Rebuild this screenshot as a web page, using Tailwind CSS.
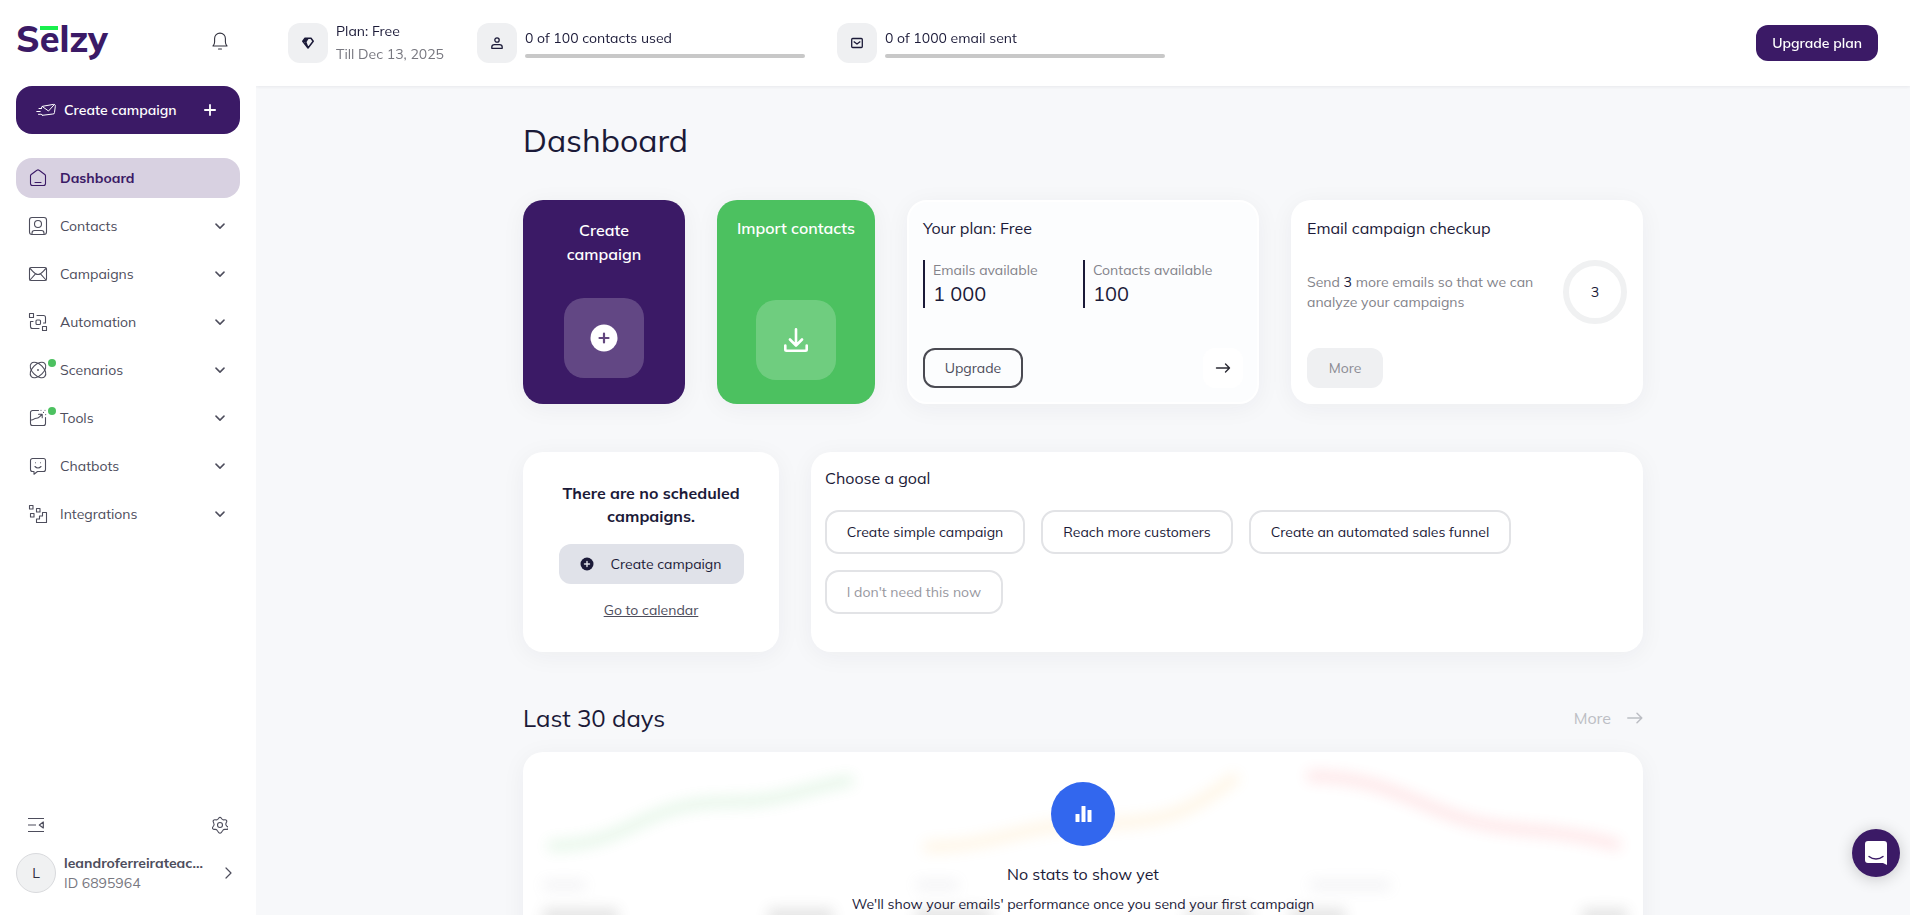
<!DOCTYPE html>
<html lang="en">
<head>
  <meta charset="UTF-8" />
  <meta name="viewport" content="width=device-width, initial-scale=1.0"/>
  <title>Dashboard | Selzy</title>
  <script src="https://cdn.jsdelivr.net/npm/@tailwindcss/browser@4"></script>
</head>
<body class="flex h-screen overflow-hidden bg-white font-['Mulish','Open_Sans',sans-serif] text-sm text-[#1b1a38]">

  <!-- Sidebar -->
  <aside class="z-20 flex w-64 shrink-0 flex-col bg-white px-4 pb-[22px]">
    <div class="flex h-[86px] items-center justify-between pr-3 pb-1">
      <a href="#" aria-label="Selzy" class="relative block pb-1 text-4xl leading-[38px] font-extrabold text-[#3b1a66]">Selzy
        <span class="absolute top-[6px] left-6 h-1 w-[18px] bg-[#19ef4d]"></span>
      </a>
      <button aria-label="Notifications">
        <svg class="h-[18px] w-4" viewBox="0 0 16 18" fill="none" stroke="#33333f" stroke-width="1.1" stroke-linecap="round" stroke-linejoin="round"><path d="M1 14h14c-1-1-1.600-2-1.600-4V6.500a5.400 5.400 0 0 0-10.800 0V10c0 2-.6 3-1.600 4zM6.500 17h3"/></svg>
      </button>
    </div>

    <button class="flex h-12 items-center rounded-2xl bg-[#3b1a66] pr-6 pl-5 font-semibold text-white">
      <svg class="mr-2 h-4 w-5" viewBox="0 0 20 16" fill="none" stroke="#fff" stroke-width="1" stroke-linecap="round" stroke-linejoin="round"><path d="M6.500 13.300 16.800 12a1.500 1.500 0 0 0 1.700-1.500l.8-6.200A1.500 1.500 0 0 0 17.500 2.400L7 4.200a1.500 1.500 0 0 0-1.600 1.300M6.500 13.300a1.500 1.500 0 0 1-1.300-1.100M6.300 4.500 12.500 9l5.700-6.300M3 6.500h2.500M.8 9.500h3.400M2.500 12.300h2"/></svg>
      Create campaign
      <svg class="ml-auto size-3" viewBox="0 0 12 12" stroke="#fff" stroke-width="1.800" stroke-linecap="round"><path d="M6 .9v10.200M.9 6h10.200"/></svg>
    </button>

    <nav class="mt-6 flex flex-col gap-2 text-[#4d4d5c]">
      <a href="#" class="flex h-10 items-center gap-3 rounded-2xl bg-[#d8d1e1] px-3 font-bold text-[#3b1a66]">
        <svg class="size-5" viewBox="0 0 20 20" fill="none" stroke="#3b1a66" stroke-width="1.100" stroke-linecap="round" stroke-linejoin="round"><path d="M2.500 7.800c0-.6.3-1 .7-1.300l5.700-4.200a1.800 1.800 0 0 1 2.200 0l5.700 4.200c.4.300.7.700.7 1.300v7.700a2 2 0 0 1-2 2h-11a2 2 0 0 1-2-2zM7 14.500h6"/></svg>
        Dashboard
      </a>
      <a href="#" class="flex h-10 items-center gap-3 px-3">
        <svg class="size-5" viewBox="0 0 20 20" fill="none" stroke="#4d4d5c" stroke-width="1.100" stroke-linecap="round" stroke-linejoin="round"><rect x="1.500" y="1.500" width="17" height="17" rx="2.500"/><circle cx="10" cy="8" r="3.500"/><path d="M4 18.200v-1c0-1.500 1-2.700 2.500-2.700h7c1.500 0 2.500 1.200 2.500 2.700v1"/></svg>
        Contacts
        <svg class="mr-[3px] ml-auto size-[10px]" viewBox="0 0 8 8" fill="none" stroke="#4d4d5c" stroke-width="1.200" stroke-linecap="round" stroke-linejoin="round"><path d="m.8 2.500 3.200 3.200 3.200-3.200"/></svg>
      </a>
      <a href="#" class="flex h-10 items-center gap-3 px-3">
        <svg class="size-5" viewBox="0 0 20 20" fill="none" stroke="#4d4d5c" stroke-width="1.100" stroke-linecap="round" stroke-linejoin="round"><rect x="1.500" y="3.500" width="17" height="13" rx="1.500"/><path d="M2 4.500c3 2.500 4.500 6 8 6s5-3.500 8-6M2 16l5.500-6.200M18 16l-5.500-6.200"/></svg>
        Campaigns
        <svg class="mr-[3px] ml-auto size-[10px]" viewBox="0 0 8 8" fill="none" stroke="#4d4d5c" stroke-width="1.200" stroke-linecap="round" stroke-linejoin="round"><path d="m.8 2.500 3.200 3.200 3.200-3.200"/></svg>
      </a>
      <a href="#" class="flex h-10 items-center gap-3 px-3">
        <svg class="size-5" viewBox="0 0 20 20" fill="none" stroke="#4d4d5c" stroke-width="1.100" stroke-linecap="round" stroke-linejoin="round"><rect x="1.500" y="1.500" width="4" height="4"/><rect x="14.500" y="14.500" width="4" height="4"/><rect x="8" y="8" width="4.500" height="4.500" rx="1"/><path d="M9 3.500h6.500a2 2 0 0 1 2 2V11h-2M11 16.500H4.500a2 2 0 0 1-2-2V9.500H5"/></svg>
        Automation
        <svg class="mr-[3px] ml-auto size-[10px]" viewBox="0 0 8 8" fill="none" stroke="#4d4d5c" stroke-width="1.200" stroke-linecap="round" stroke-linejoin="round"><path d="m.8 2.500 3.200 3.200 3.200-3.200"/></svg>
      </a>
      <a href="#" class="relative flex h-10 items-center gap-3 px-3">
        <svg class="size-5" viewBox="0 0 20 20" fill="none" stroke="#4d4d5c" stroke-width="1.100"><ellipse cx="10" cy="10" rx="9.500" ry="5.600" transform="rotate(45 10 10)"/><ellipse cx="10" cy="10" rx="9.500" ry="5.600" transform="rotate(-45 10 10)"/><circle cx="10" cy="10" r=".9" fill="#4d4d5c" stroke="none"/></svg>
        <span class="absolute top-[9px] left-8 size-2 rounded-full bg-[#4cc160]"></span>
        Scenarios
        <svg class="mr-[3px] ml-auto size-[10px]" viewBox="0 0 8 8" fill="none" stroke="#4d4d5c" stroke-width="1.200" stroke-linecap="round" stroke-linejoin="round"><path d="m.8 2.500 3.200 3.200 3.200-3.200"/></svg>
      </a>
      <a href="#" class="relative flex h-10 items-center gap-3 px-3">
        <svg class="size-5" viewBox="0 0 20 20" fill="none" stroke="#4d4d5c" stroke-width="1.100" stroke-linecap="round" stroke-linejoin="round"><path d="M10.500 2.500h-6a2 2 0 0 0-2 2v11a2 2 0 0 0 2 2h11a2 2 0 0 0 2-2v-6M3 12c2.500.5 3-2 5.500-1.800S11.500 8.500 14 6.500M10.500 6.300h3.700v3.500M13 2.200v.1M17 2.200v.1M15.500 4.300v.1M17.700 6.500v.1"/></svg>
        <span class="absolute top-[9px] left-8 size-2 rounded-full bg-[#4cc160]"></span>
        Tools
        <svg class="mr-[3px] ml-auto size-[10px]" viewBox="0 0 8 8" fill="none" stroke="#4d4d5c" stroke-width="1.200" stroke-linecap="round" stroke-linejoin="round"><path d="m.8 2.500 3.200 3.200 3.200-3.200"/></svg>
      </a>
      <a href="#" class="flex h-10 items-center gap-3 px-3">
        <svg class="size-5" viewBox="0 0 20 20" fill="none" stroke="#4d4d5c" stroke-width="1.100" stroke-linecap="round" stroke-linejoin="round"><path d="M4.500 2.500h11a2 2 0 0 1 2 2v9a2 2 0 0 1-2 2H9.500L6 18.200v-2.700H4.500a2 2 0 0 1-2-2v-9a2 2 0 0 1 2-2zM7 10.500c1.800 1.900 4.200 1.900 6 0M7.500 6.700v.1M12.500 6.700v.1"/></svg>
        Chatbots
        <svg class="mr-[3px] ml-auto size-[10px]" viewBox="0 0 8 8" fill="none" stroke="#4d4d5c" stroke-width="1.200" stroke-linecap="round" stroke-linejoin="round"><path d="m.8 2.500 3.200 3.200 3.200-3.200"/></svg>
      </a>
      <a href="#" class="flex h-10 items-center gap-3 px-3">
        <svg class="size-5" viewBox="0 0 20 20" fill="none" stroke="#4d4d5c" stroke-width="1.100" stroke-linejoin="round"><rect x="1.500" y="1.500" width="3.500" height="3.500"/><rect x="8.500" y="4.500" width="3.500" height="3.500"/><rect x="2.500" y="9.500" width="3.500" height="3.500"/><path d="M18.500 8.500h-4v3.500h-3v3h-3v3.500h10z"/></svg>
        Integrations
        <svg class="mr-[3px] ml-auto size-[10px]" viewBox="0 0 8 8" fill="none" stroke="#4d4d5c" stroke-width="1.200" stroke-linecap="round" stroke-linejoin="round"><path d="m.8 2.500 3.200 3.200 3.200-3.200"/></svg>
      </a>
    </nav>

    <div class="mt-auto flex h-5 items-center justify-between px-3">
      <button aria-label="Collapse menu">
        <svg class="size-4" viewBox="0 0 16 16" fill="none" stroke="#4d4d5c" stroke-width="1.200" stroke-linejoin="round"><path d="M0 1.500h16M0 8h8M0 14.500h16M15.300 5v6l-4-3z"/></svg>
      </button>
      <button aria-label="Settings">
        <svg class="h-[18px] w-4" viewBox="0 0 16 18" fill="none" stroke="#4d4d5c" stroke-width="1.100" stroke-linejoin="round"><path d="M6.800 1.400a1.500 1.500 0 0 1 2.400 0l.7 1c.4.600 1.100 1 1.800.9l1.300-.1a1.500 1.500 0 0 1 1.600 2.100l-.5 1.200a2 2 0 0 0 0 2l.7 1.100a1.500 1.500 0 0 1-.3 3.200h-1.800c-.7 0-1.400.3-1.800.9l-1.700 2.400a1.500 1.500 0 0 1-2.400 0L5.100 13.700c-.4-.6-1.100-.9-1.800-.9H1.900A1.500 1.500 0 0 1 .8 10.400l1.100-1.700a2 2 0 0 0 0-1.600L1.300 5.300A1.500 1.500 0 0 1 3 3.200l1.300.1c.7.1 1.400-.3 1.800-.9z" transform="translate(0 .6)"/><circle cx="8" cy="9" r="2.500"/></svg>
      </button>
    </div>
    <a href="#" class="mt-[18px] flex items-center pr-2">
      <span class="mr-2 flex size-10 items-center justify-center rounded-full border border-[#d9dadd] bg-[#f0f1f2] text-[#2e2e42]">L</span>
      <span class="flex w-36 flex-col leading-5">
        <span class="font-bold text-[#4d4d5c]">leandroferreirateac...</span>
        <span class="text-[#77777f]">ID 6895964</span>
      </span>
      <svg class="ml-auto h-3 w-[7px]" viewBox="0 0 7 12" fill="none" stroke="#4d4d5c" stroke-width="1.200" stroke-linecap="round" stroke-linejoin="round"><path d="m1 1 5 5-5 5"/></svg>
    </a>
  </aside>

  <div class="flex min-w-0 flex-1 flex-col">
    <!-- Top bar -->
    <header class="z-10 flex h-[86px] shrink-0 items-center gap-8 bg-white px-8 shadow-[0_1px_3px_rgba(30,30,60,0.07)]">
      <div class="flex items-center gap-2">
        <span class="flex size-10 items-center justify-center rounded-xl bg-[#eff0f2]">
          <svg class="size-3" viewBox="0 0 12 12" fill="none" stroke="#1b1a38" stroke-width="1.500" stroke-linejoin="round"><path d="M3 1.200h6l2.200 3L6 11 .8 4.200zM3.500 4.500 6 11"/><path d="M3 1.200h4L4.500 5H1z" fill="#1b1a38" stroke="none"/></svg>
        </span>
        <p class="w-[109px] leading-[23px] whitespace-nowrap">Plan: Free<br><span class="text-[#77777f]">Till Dec 13, 2025</span></p>
      </div>
      <div class="flex items-center gap-2">
        <span class="flex size-10 items-center justify-center rounded-xl bg-[#eff0f2]">
          <svg class="size-3" viewBox="0 0 12 12" fill="none" stroke="#1b1a38" stroke-width="1.300" stroke-linejoin="round"><circle cx="6" cy="3" r="2.200"/><path d="M.8 11.300V10c0-1.500 1.200-2.300 2.700-2.300h5c1.500 0 2.700.8 2.700 2.300v1.300z"/></svg>
        </span>
        <div class="flex w-70 flex-col gap-[6px]">
          <span class="leading-5">0 of 100 contacts used</span>
          <span class="h-1 rounded-sm bg-[#c8c8c8]"></span>
        </div>
      </div>
      <div class="flex items-center gap-2">
        <span class="flex size-10 items-center justify-center rounded-xl bg-[#eff0f2]">
          <svg class="size-3" viewBox="0 0 12 12" fill="none" stroke="#1b1a38" stroke-width="1.300" stroke-linejoin="round"><rect x=".7" y="1.500" width="10.600" height="9" rx="1"/><path d="m2.700 4.500 3.300 2.500 3.300-2.500"/></svg>
        </span>
        <div class="flex w-70 flex-col gap-[6px]">
          <span class="leading-5">0 of 1000 email sent</span>
          <span class="h-1 rounded-sm bg-[#c8c8c8]"></span>
        </div>
      </div>
      <button class="ml-auto h-9 rounded-xl bg-[#3b1a66] px-4 font-semibold whitespace-nowrap text-white">Upgrade plan</button>
    </header>

    <!-- Content -->
    <main class="flex-1 overflow-y-auto bg-[#f7f8fa] px-8 [scrollbar-width:none]">
      <div class="mx-auto max-w-[1120px] pt-[34px] pb-16">
        <h1 class="text-[32px] leading-10">Dashboard</h1>

        <section class="mt-10 grid h-51 grid-cols-[162px_158px_1fr_1fr] gap-8">
          <button class="flex flex-col items-center justify-between rounded-[20px] bg-[#3b1a66] px-8 pt-[18px] pb-[26px] text-base leading-6 font-semibold text-white shadow-[0_4px_24px_rgba(30,30,60,0.05)]">
            Create campaign
            <span class="flex size-20 items-center justify-center rounded-[20px] bg-white/20">
              <svg class="size-7" viewBox="0 0 28 28"><circle cx="14" cy="14" r="13.500" fill="#fff"/><path d="M14 9.500v9M9.500 14h9" stroke="#63477f" stroke-width="2.200" stroke-linecap="round"/></svg>
            </span>
          </button>
          <button class="flex flex-col items-center justify-between rounded-[20px] bg-[#4cc160] px-2 pt-4 pb-6 text-base leading-6 font-semibold whitespace-nowrap text-white shadow-[0_4px_24px_rgba(30,30,60,0.05)]">
            Import contacts
            <span class="flex size-20 items-center justify-center rounded-[20px] bg-white/20">
              <svg class="size-6" viewBox="0 0 24 24" fill="none" stroke="#fff" stroke-width="2.600" stroke-linecap="round" stroke-linejoin="round"><path d="M12 1.300v15.500M6 11.500l6 6 6-6M1.300 17.500v4a1.200 1.200 0 0 0 1.200 1.200h19a1.200 1.200 0 0 0 1.200-1.200v-4"/></svg>
            </span>
          </button>

          <div class="flex flex-col rounded-[20px] border-2 border-white bg-[#fcfdfe] p-[14px] shadow-[0_4px_24px_rgba(30,30,60,0.05)]">
            <h2 class="text-base leading-6">Your plan: Free</h2>
            <div class="mt-5 grid grid-cols-2">
              <div class="h-12 border-l-2 border-[#1b1a38] pl-2">
                <p class="leading-5 text-[#83838a]">Emails available</p>
                <p class="text-xl leading-7">1 000</p>
              </div>
              <div class="h-12 border-l-2 border-[#1b1a38] pl-2">
                <p class="leading-5 text-[#83838a]">Contacts available</p>
                <p class="text-xl leading-7">100</p>
              </div>
            </div>
            <div class="mt-auto flex items-center justify-between">
              <button class="h-10 w-25 rounded-xl border-2 border-[#4a4a52] text-[#4d4d5c]">Upgrade</button>
              <button aria-label="Open plan" class="flex size-10 items-center justify-center rounded-xl bg-white">
                <svg class="h-3 w-4" viewBox="0 0 16 12" fill="none" stroke="#2a2a33" stroke-width="1.400" stroke-linecap="round" stroke-linejoin="round"><path d="M1.500 6h13M10.500 2l4 4-4 4"/></svg>
              </button>
            </div>
          </div>

          <div class="flex flex-col rounded-[20px] bg-white p-4 shadow-[0_4px_24px_rgba(30,30,60,0.05)]">
            <h2 class="text-base leading-6">Email campaign checkup</h2>
            <div class="mt-5 flex items-center justify-between">
              <p class="leading-5 whitespace-nowrap text-[#83838a]">Send <span class="text-[#1b1a38]">3</span> more emails so that we can<br>analyze your campaigns</p>
              <span class="flex size-16 items-center justify-center rounded-full border-6 border-[#f0f1f2]">3</span>
            </div>
            <button class="mt-auto h-10 w-19 rounded-xl bg-[#eff0f2] text-[#8c8c94]">More</button>
          </div>
        </section>

        <section class="mt-12 grid h-50 grid-cols-[256px_1fr] gap-8">
          <div class="flex flex-col items-center rounded-[20px] bg-white pt-[30px] shadow-[0_4px_24px_rgba(30,30,60,0.05)]">
            <h2 class="w-48 text-center text-base leading-[23px] font-bold">There are no scheduled campaigns.</h2>
            <button class="mt-4 flex h-10 w-[185px] items-center justify-center gap-4 rounded-xl bg-[#e0e2e9] whitespace-nowrap">
              <svg class="size-[14px]" viewBox="0 0 14 14"><circle cx="7" cy="7" r="6.500" fill="#1b1a38"/><path d="M7 4.500v5M4.500 7h5" stroke="#e0e2e9" stroke-width="1.400" stroke-linecap="round"/></svg>
              Create campaign
            </button>
            <a href="#" class="mt-4 leading-5 text-[#4d4d5c] underline">Go to calendar</a>
          </div>
          <div class="rounded-[20px] bg-white px-[14px] pt-[14px] shadow-[0_4px_24px_rgba(30,30,60,0.05)]">
            <h2 class="text-base leading-6">Choose a goal</h2>
            <div class="mt-5 flex flex-wrap gap-4">
              <button class="h-11 w-50 rounded-[14px] border-2 border-[#e2e3e6] whitespace-nowrap">Create simple campaign</button>
              <button class="h-11 w-48 rounded-[14px] border-2 border-[#e2e3e6] whitespace-nowrap">Reach more customers</button>
              <button class="h-11 w-[262px] rounded-[14px] border-2 border-[#e2e3e6] whitespace-nowrap">Create an automated sales funnel</button>
              <button class="h-11 w-[178px] rounded-[14px] border-2 border-[#e2e3e6] whitespace-nowrap text-[#98989f]">I don't need this now</button>
            </div>
          </div>
        </section>

        <section class="mt-12">
          <div class="flex h-9 items-center justify-between">
            <h2 class="text-2xl">Last 30 days</h2>
            <a href="#" class="flex items-center gap-4 text-base text-[#bcbec4]">More
              <svg class="h-3 w-4" viewBox="0 0 16 12" fill="none" stroke="#bcbec4" stroke-width="1.500" stroke-linecap="round" stroke-linejoin="round"><path d="M.8 6h14M10 1.200 14.800 6 10 10.800"/></svg>
            </a>
          </div>

          <div class="relative mt-4 h-70 overflow-hidden rounded-[20px] bg-white shadow-[0_4px_24px_rgba(30,30,60,0.05)]">
            <!-- Blurred placeholder charts -->
            <div class="grid grid-cols-3 opacity-15 blur-[7px]" aria-hidden="true">
              <svg class="h-50 w-full" viewBox="0 0 373 200" fill="none"><path d="M25 94C110 94 115 50 205 50 265 50 285 34 330 28" stroke="#4cc160" stroke-width="10"/><path d="M20 165h75M245 165h65" stroke="#555" stroke-width="18"/><path d="M20 133h42" stroke="#99a" stroke-width="8"/></svg>
              <svg class="h-50 w-full" viewBox="0 0 373 200" fill="none"><path d="M28 95c72 0 102-23 162-23 80 0 100-10 151-48" stroke="#ffb845" stroke-width="10"/><path d="M20 165h75M290 165h65" stroke="#555" stroke-width="18"/><path d="M20 133h42" stroke="#99a" stroke-width="8"/></svg>
              <svg class="h-50 w-full" viewBox="0 0 373 200" fill="none"><path d="M37 24c73 0 103 26 153 42s100 9 160 28" stroke="#fb4a55" stroke-width="10"/><path d="M20 165h55M312 165h45" stroke="#555" stroke-width="18"/><path d="M40 133h80" stroke="#99a" stroke-width="8"/></svg>
            </div>
            <div class="absolute inset-0 flex flex-col items-center pt-[30px]">
              <span class="flex size-16 items-center justify-center rounded-full bg-[#3267ee]">
                <svg class="h-4 w-[17px]" viewBox="0 0 17 16" fill="#fff"><rect x=".5" y="8" width="4" height="8" rx=".5"/><rect x="6.500" width="4" height="16" rx=".5"/><rect x="12.500" y="4" width="4" height="12" rx=".5"/></svg>
              </span>
              <h3 class="mt-4 text-base leading-6">No stats to show yet</h3>
              <p class="mt-2 leading-5">We'll show your emails' performance once you send your first campaign</p>
            </div>
          </div>
        </section>
      </div>
    </main>
  </div>

  <!-- Support chat -->
  <button aria-label="Open chat" class="fixed right-[10px] bottom-[38px] z-20 flex size-12 items-center justify-center rounded-full bg-[#3b1a66] shadow-[0_2px_16px_rgba(0,0,0,0.2)]">
    <svg class="h-6 w-[22px]" viewBox="0 0 22 24"><path d="M3 0h16a3 3 0 0 1 3 3v21l-4-2H3a3 3 0 0 1-3-3V3a3 3 0 0 1 3-3z" fill="#fff"/><path d="M4 15.500c4 3.300 10 3.300 14 0" fill="none" stroke="#3b1a66" stroke-width="1.400" stroke-linecap="round"/></svg>
  </button>
</body>
</html>
